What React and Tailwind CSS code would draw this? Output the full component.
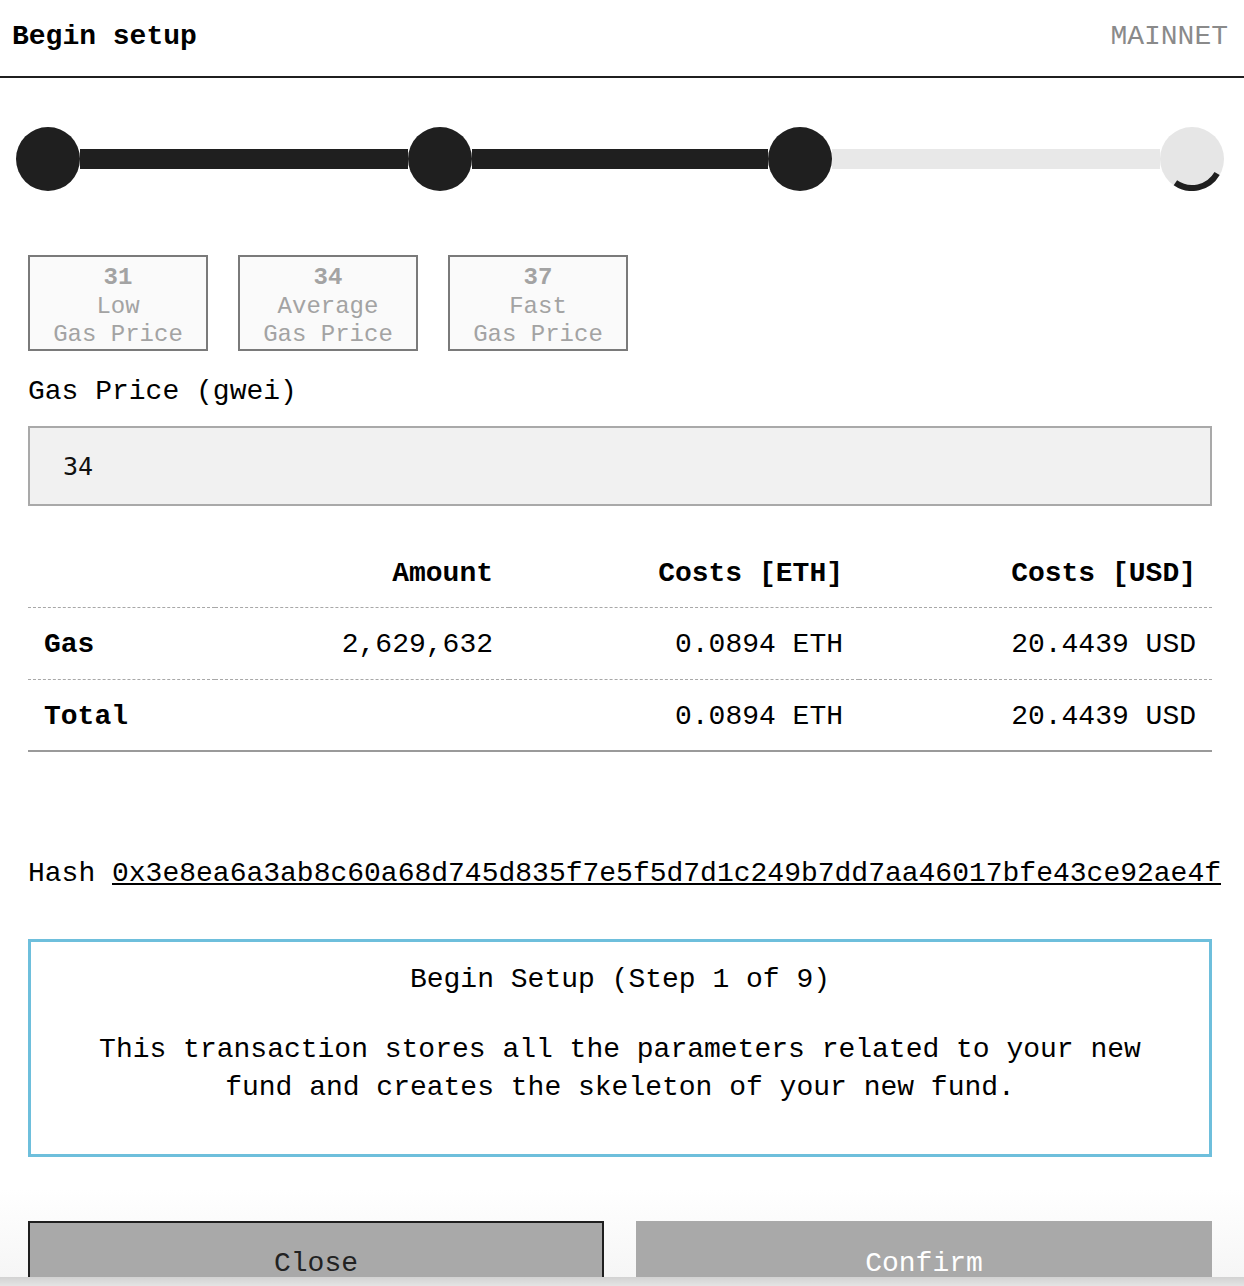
import React from "react";

function Dot() {
  return <div className="w-[64px] h-[64px] rounded-full bg-[#1f1f1f] shrink-0" />;
}

function Spinner() {
  return (
    <div className="w-[64px] h-[64px] rounded-full bg-[#e6e6e6] shrink-0">
      <svg width="64" height="64" viewBox="0 0 64 64">
        <path d="M57.1 46.5 A29 29 0 0 1 15.4 55.8" fill="none" stroke="#1f1f1f" strokeWidth="6" />
      </svg>
    </div>
  );
}

function GasBox({ v, l }) {
  return (
    <div className="w-[180px] h-[96px] border-2 border-[#7a7a7a] bg-[#fafafa] text-[#a3a3a3] text-[24px] leading-[28.5px] text-center pt-[7px]">
      <div className="font-bold">{v}</div>
      <div>{l}</div>
      <div>Gas Price</div>
    </div>
  );
}

const head = "h-[72px] flex items-center pt-[5px] border-b border-dashed border-[#a8a8a8]";
const cell = "h-[72px] flex items-center pt-[3px] border-b border-dashed border-[#a8a8a8]";
const last = "h-[72px] flex items-center pt-[3px] border-b-2 border-[#9a9a9a]";

export default function App() {
  return (
    <div className="relative w-full h-[1286px] overflow-hidden bg-white text-black text-[28px] font-['Liberation_Mono','Courier_New',monospace]">
      <div className="h-[78px] flex items-center justify-between pl-[12px] pr-[16px] border-b-2 border-[#1f1f1f] pb-[2px]">
        <div className="font-bold">Begin setup</div>
        <div className="text-[#8a8a8a]">MAINNET</div>
      </div>

      <div className="mt-[49px] pl-[16px] flex items-center">
        <Dot />
        <div className="w-[328px] h-[20px] bg-[#1f1f1f]" />
        <Dot />
        <div className="w-[296px] h-[20px] bg-[#1f1f1f]" />
        <Dot />
        <div className="w-[328px] h-[20px] bg-[#e8e8e8]" />
        <Spinner />
      </div>

      <div className="pl-[28px] pr-[32px]">
        <div className="mt-[64px] flex gap-[30px]">
          <GasBox v="31" l="Low" />
          <GasBox v="34" l="Average" />
          <GasBox v="37" l="Fast" />
        </div>

        <div className="mt-[23px] leading-[36px]">Gas Price (gwei)</div>

        <div className="mt-[16px] h-[80px] border-2 border-[#a9a9a9] bg-[#f1f1f1] flex items-center pl-[33px] pt-[1px] text-[25px] font-['DejaVu_Sans_Mono',monospace] text-[#111]">
          34
        </div>

        <div className="mt-[30px] grid grid-cols-[187px_294px_350px_353px]">
          <div className="h-[72px] border-b border-dashed border-[#a8a8a8]" />
          <div className={head + " justify-end pr-[16px] font-bold"}>Amount</div>
          <div className={head + " justify-end pr-[16px] font-bold"}>Costs [ETH]</div>
          <div className={head + " justify-end pr-[16px] font-bold"}>Costs [USD]</div>

          <div className={cell + " pl-[16px] font-bold"}>Gas</div>
          <div className={cell + " justify-end pr-[16px]"}>2,629,632</div>
          <div className={cell + " justify-end pr-[16px]"}>0.0894 ETH</div>
          <div className={cell + " justify-end pr-[16px]"}>20.4439 USD</div>

          <div className={last + " pl-[16px] font-bold"}>Total</div>
          <div className="h-[72px] border-b-2 border-[#9a9a9a]" />
          <div className={last + " justify-end pr-[16px]"}>0.0894 ETH</div>
          <div className={last + " justify-end pr-[16px]"}>20.4439 USD</div>
        </div>

        <div className="mt-[106px] leading-[32px] whitespace-nowrap">
          Hash <a className="underline text-black" href="#">0x3e8ea6a3ab8c60a68d745d835f7e5f5d7d1c249b7dd7aa46017bfe43ce92ae4f</a>
        </div>

        <div className="mt-[49px] h-[218px] border-[3px] border-[#6ebfdc] text-center pt-[19px] leading-[38px]">
          <div>Begin Setup (Step 1 of 9)</div>
          <div className="mt-[32px] px-[40px]">
            This transaction stores all the parameters related to your new fund and creates the skeleton of your new fund.
          </div>
        </div>
      </div>

      <div className="mt-[32px] pt-[32px] pl-[28px] pr-[32px] bg-gradient-to-b from-white to-[#f3f3f3] flex gap-[32px]">
        <div className="w-[576px] h-[82px] border-2 border-[#1f1f1f] bg-[#a9a9a9] flex items-center justify-center pt-[4px] text-[#222]">
          Close
        </div>
        <div className="w-[576px] h-[82px] bg-[#a9a9a9] flex items-center justify-center pt-[4px] text-white">
          Confirm
        </div>
      </div>

      <div className="absolute left-0 right-0 bottom-0 h-[9px] bg-gradient-to-b from-[#d2d2d2] to-[#e4e4e4]" />
    </div>
  );
}
